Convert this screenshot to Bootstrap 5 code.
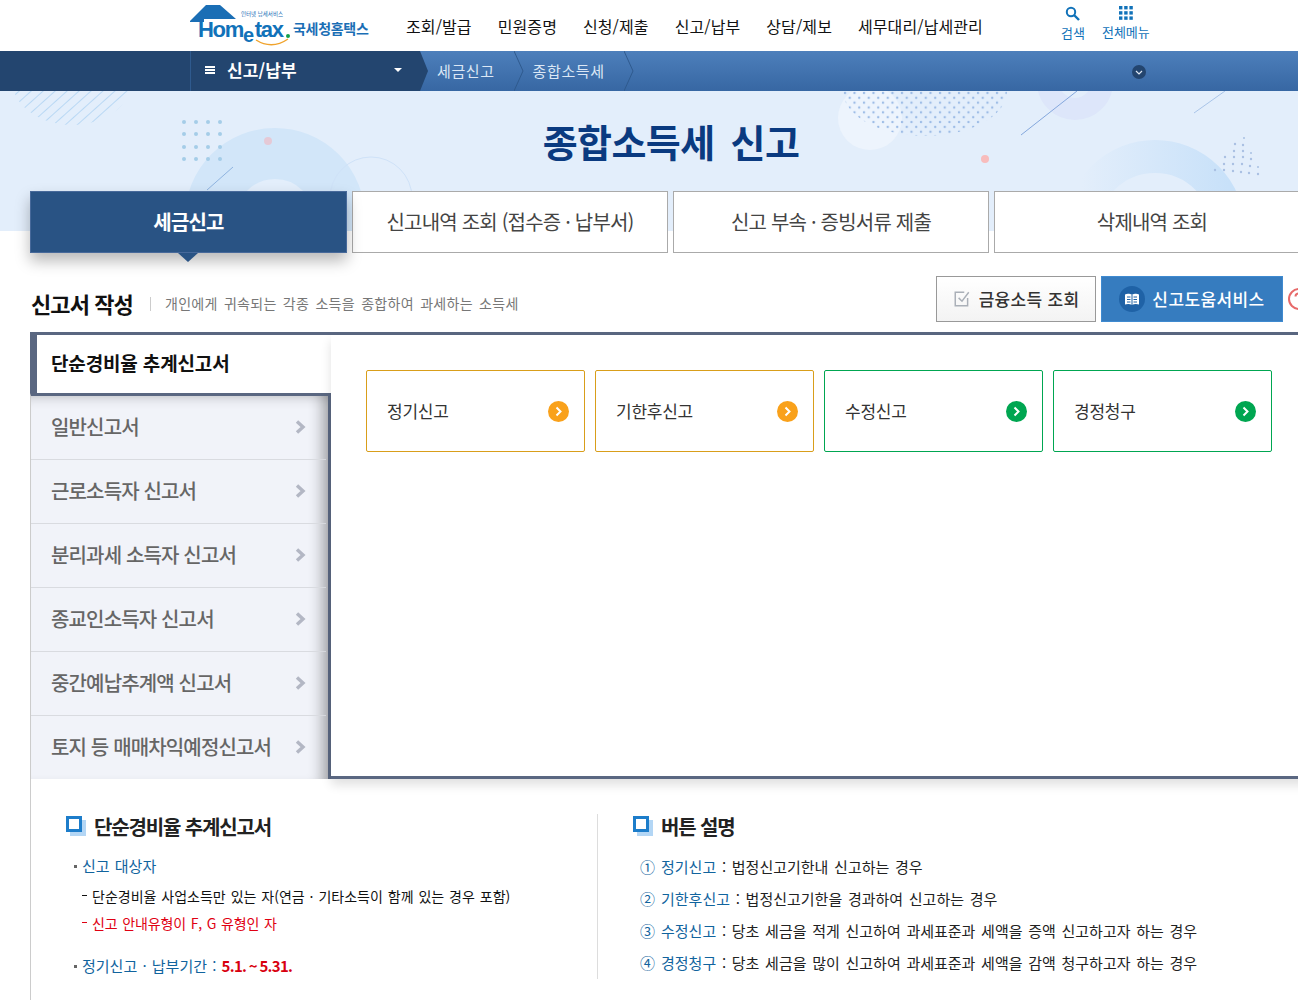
<!DOCTYPE html>
<html lang="ko">
<head>
<meta charset="utf-8">
<title>종합소득세 신고</title>
<link href="https://cdn.jsdelivr.net/npm/bootstrap@5.3.0/dist/css/bootstrap.min.css" rel="stylesheet">
<style>
  html, body { overflow-x: hidden; }
  body { font-family: "Noto Sans CJK KR", "Noto Sans", sans-serif; color: #222; font-size: 15px; }
  .top-head { height: 51px; padding-left: 190px; }
  .logo-svg { width: 182px; height: 50px; flex: none; }
  .top-menu { width: 655px; margin: 0 0 0 34px; padding: 0; gap: 26px; font-size: 16px; color: #111; letter-spacing: .1px; }
  .top-util { gap: 17px; font-size: 13px; color: #1172b9; line-height: 1; margin-bottom: 7px; }
  .top-util span { display: block; margin-top: 5px; }
  .path-bar { height: 40px; background: linear-gradient(#4d7fbb, #3767a3); color: #fff; }
  .path-main { width: 428px; height: 40px; padding-left: 190px; background: #23456f; clip-path: polygon(0 0, 420px 0, 428px 20px, 420px 100%, 0 100%); flex: none; }
  .path-title { width: 230px; height: 40px; border-left: 1px solid #2f5a8e; padding: 0 14px 2px 14px; font-size: 17px; font-weight: 700; letter-spacing: .1px; }
  .burger { width: 10px; height: 8px; border-top: 2px solid #fff; border-bottom: 2px solid #fff; position: relative; margin-right: 12px; }
  .burger::after { content: ""; position: absolute; left: 0; right: 0; top: 1px; height: 2px; background: #fff; }
  .caret-down { width: 0; height: 0; border: 4px solid transparent; border-top-color: #fff; border-bottom: 0; margin-left: auto; margin-right: 4px; }
  .crumb { font-size: 15px; color: #dbe7f5; letter-spacing: .6px; margin-left: 9px; }
  .crumb-sep { width: 10px; height: 40px; flex: none; margin-left: 19px; }
  .more-btn { width: 14px; height: 14px; border-radius: 50%; background: #23456f; position: absolute; left: 1132px; top: 14px; }
  .path-bar-in { height: 40px; }
  .hero { height: 140px; background: #e3eefb; overflow: hidden; }
  .hero-art { position: absolute; left: 0; top: 0; width: 1298px; height: 140px; }
  .hero-title { padding: 26px 0 0 44px; font-size: 38px; font-weight: 700; color: #0a3a80; line-height: 48px; letter-spacing: -0.6px; word-spacing: 6px; }
  .tab-row { margin: -40px 0 0 30px; gap: 5px; width: 1290px; }
  .tab-cell { width: 316px; height: 62px; background: #fff; border: 1px solid #aaa; font-size: 20px; color: #444; letter-spacing: -0.8px; flex: none; }
  .tab-cell.on { width: 317px; background: #295384; border-color: #47699a; color: #fff; font-weight: 700; box-shadow: 0 8px 14px rgba(0, 0, 0, .28); position: relative; }
  .tab-cell.on::after { content: ""; position: absolute; left: 147px; top: 61px; border: 10px solid transparent; border-top: 9px solid #295384; border-bottom: 0; }
  .title-row { height: 46px; width: 1280px; margin: 23px 0 10px 30px; }
  .title-main { font-size: 22px; font-weight: 700; color: #111; line-height: 1; padding: 16px 0 0 1px; letter-spacing: -0.9px; }
  .title-desc { font-size: 14px; color: #777; margin-left: 17px; padding: 0 0 0 15px; position: relative; top: 17px; letter-spacing: .3px; word-spacing: 2px; }
  .title-desc::before { content: ""; position: absolute; left: 0; top: 4px; height: 14px; width: 1px; background: #ccc; }
  .btn-fin { width: 160px; height: 46px; margin-left: auto; background: linear-gradient(#fff, #f3f3f3); border: 1px solid #999; font-size: 17px; font-weight: 500; color: #333; letter-spacing: .3px; flex: none; }
  .btn-help { width: 182px; height: 46px; margin-left: 5px; background: #367cbf; border: 1px solid #3f8ad0; font-size: 17px; font-weight: 500; color: #fff; letter-spacing: .4px; flex: none; }
  .help-round { width: 26px; height: 26px; border-radius: 50%; background: #1f62a6; margin-right: 7px; }
  .red-round { width: 22px; height: 22px; margin-left: 5px; flex: none; }
  .main-box { margin-left: 30px; border-top: 3px solid #5a6781; width: 1290px; }
  .side-col { width: 301px; flex: none; }
  .side-on { height: 58px; border-left: 7px solid #5a6781; padding-left: 14px; font-size: 19px; font-weight: 700; color: #111; letter-spacing: -0.15px; padding-bottom: 1px; }
  .side-list { border-top: 3px solid #5a6781; border-right: 3px solid #5a6781; border-left: 1px solid #ccc; background: #f1f3f9; box-shadow: inset -16px 0 14px -10px rgba(0, 0, 0, .3), inset 0 12px 12px -10px rgba(0, 0, 0, .18); margin: 0; padding: 0; }
  .side-item { height: 64px; margin-right: 2px; padding: 0 20px 2px 20px; border-bottom: 1px solid #d9dbe0; font-size: 20px; font-weight: 500; color: #666; letter-spacing: -0.85px; }
  .side-item:last-child { height: 63px; border-bottom: 0; }
  .side-chev { width: 11px; height: 14px; margin-left: auto; flex: none; }
  .work-panel { flex: 1; padding: 35px 0 0 35px; border-bottom: 3px solid #5a6781; box-shadow: 0 6px 10px rgba(0, 0, 0, .12); gap: 10px; }
  .pick-box { width: 219px; height: 82px; border: 1px solid #d99e1a; border-radius: 2px; padding: 0 15px 0 20px; font-size: 17px; color: #333; letter-spacing: -0.25px; flex: none; }
  .pick-box.go { border-color: #00a651; }
  .pick-dot { width: 21px; height: 21px; flex: none; margin-left: auto; }
  .guide { margin-left: 30px; border-left: 1px solid #ccc; padding-top: 35px; height: 221px; }
  .guide-left { width: 567px; padding-left: 35px; height: 165px; border-right: 1px solid #ddd; flex: none; }
  .guide-right { padding-left: 35px; }
  .guide-head { font-size: 20px; font-weight: 700; color: #222; line-height: 26px; letter-spacing: -1.15px; margin: 0 0 15px; padding-left: 28px; position: relative; }
  .guide-head::before { content: ""; position: absolute; left: 0; top: 2px; width: 16px; height: 16px; background: #fff; border: 3px solid #1d7dca; box-shadow: 4px 4px 0 0 #b3d6f5; }
  .guide-blue { color: #11649e; }
  .guide-sub { font-size: 15px; line-height: 22px; padding-left: 16px; position: relative; margin: 0; word-spacing: 1px; }
  .guide-sub::before { content: ""; position: absolute; left: 8px; top: 10px; width: 3px; height: 3px; background: #666; }
  .guide-sub b { color: #d8000f; letter-spacing: -.7px; word-spacing: -1px; }
  .guide-line { font-size: 14px; line-height: 20px; padding-left: 26px; position: relative; margin: 0; color: #111; word-spacing: 1px; }
  .guide-gap1 { margin-bottom: 9px; }
  .guide-gap2 { margin-bottom: 7px; }
  .guide-gap3 { margin-bottom: 22px; }
  .guide-line.is-red { color: #e00012; letter-spacing: -.1px; word-spacing: .8px; }
  .guide-line::before { content: ""; position: absolute; left: 16px; top: 9px; width: 5px; height: 1px; background: currentColor; }
  .step-list { margin-top: -4px; }
  .step-row { font-size: 15px; line-height: 32px; margin: 0 0 0 7px; height: 32px; word-spacing: 1.5px; }
  .step-no { display: inline-block; width: 21px; color: #11649e; }
</style>
</head>
<body>
<header class="top-head d-flex align-items-center bg-white">
  <svg class="logo-svg" viewBox="190 0 182 50">
    <path d="M190 20 L206 4 L220 4 L236 18 L204 18 L204 21 L190 21 Z" fill="#1a6eb5"/>
    <text x="198" y="36" font-family="Liberation Sans" font-weight="700" font-size="22" fill="#1172b9" letter-spacing="-1.3">Hom<tspan dy="5" font-size="20">e</tspan><tspan dy="-5" dx="2">tax</tspan></text>
    <circle cx="288" cy="35" r="2" fill="#12a04b"/>
    <path d="M256 39 Q272 49 288 38" fill="none" stroke="#f0a32c" stroke-width="1.4"/>
    <text x="241" y="15" font-family="Noto Sans CJK KR" font-size="5.5" fill="#1a6eb5">인터넷 납세서비스</text>
    <text x="293" y="33" font-family="Noto Sans CJK KR" font-weight="700" font-size="14" fill="#1a6eb5" letter-spacing="-.3">국세청홈택스</text>
  </svg>
  <ul class="top-menu list-unstyled d-flex">
    <li>조회/발급</li><li>민원증명</li><li>신청/제출</li><li>신고/납부</li><li>상담/제보</li><li>세무대리/납세관리</li>
  </ul>
  <div class="top-util d-flex text-center">
    <div>
      <svg width="15" height="15" viewBox="0 0 15 15"><circle cx="6" cy="6" r="4.2" fill="none" stroke="#1172b9" stroke-width="2"/><path d="M9 9 L14 14" stroke="#1172b9" stroke-width="2.4"/></svg>
      <span>검색</span>
    </div>
    <div>
      <svg width="14" height="14" viewBox="0 0 14 14" fill="#1172b9"><rect width="3.4" height="3.4"/><rect x="5.2" width="3.4" height="3.4"/><rect x="10.4" width="3.4" height="3.4"/><rect y="5.2" width="3.4" height="3.4"/><rect x="5.2" y="5.2" width="3.4" height="3.4"/><rect x="10.4" y="5.2" width="3.4" height="3.4"/><rect y="10.4" width="3.4" height="3.4"/><rect x="5.2" y="10.4" width="3.4" height="3.4"/><rect x="10.4" y="10.4" width="3.4" height="3.4"/></svg>
      <span>전체메뉴</span>
    </div>
  </div>
</header>

<nav class="path-bar">
  <div class="path-bar-in d-flex align-items-center position-relative">
    <div class="path-main">
      <div class="path-title d-flex align-items-center"><i class="burger"></i>신고/납부<i class="caret-down"></i></div>
    </div>
    <span class="crumb">세금신고</span>
    <svg class="crumb-sep" viewBox="0 0 10 40"><path d="M0 0 L9 20 L0 40" fill="none" stroke="#2f5a8e"/></svg>
    <span class="crumb">종합소득세</span>
    <svg class="crumb-sep" viewBox="0 0 10 40"><path d="M0 0 L9 20 L0 40" fill="none" stroke="#2f5a8e"/></svg>
    <span class="more-btn d-flex align-items-center justify-content-center"><svg width="8" height="5" viewBox="0 0 8 5"><path d="M1 1 L4 4 L7 1" fill="none" stroke="#dfe8f3" stroke-width="1.2"/></svg></span>
  </div>
</nav>

<section class="hero position-relative">
  <svg class="hero-art" viewBox="0 91 1298 140">
    <defs>
      <clipPath id="stripeClip"><ellipse cx="72" cy="80" rx="60" ry="45"/></clipPath>
      <pattern id="stripeFill" width="8" height="8" patternUnits="userSpaceOnUse" patternTransform="rotate(-42)"><rect width="8" height="1" fill="#b9d8f4"/></pattern>
      <pattern id="dotFill" width="9.5" height="9.7" patternUnits="userSpaceOnUse" x="843" y="91"><circle cx="2" cy="2" r="1.2" fill="#9dbce6"/><circle cx="6.75" cy="6.85" r="1.2" fill="#9dbce6"/></pattern>
      <linearGradient id="arcFill" x1="0" x2="1"><stop offset="0" stop-color="#e3eefb"/><stop offset="1" stop-color="#c8e1f9"/></linearGradient>
    </defs>
    <rect x="0" y="91" width="140" height="40" fill="url(#stripeFill)" clip-path="url(#stripeClip)"/>
    <circle cx="275" cy="218" r="64.5" fill="none" stroke="#d2e6f9" stroke-width="51"/>
    <circle cx="371" cy="198" r="41" fill="none" stroke="#cfe2f8"/>
    <g fill="#a5cde8">
      <circle cx="184" cy="122" r="2"/><circle cx="196" cy="122" r="2"/><circle cx="208" cy="122" r="2"/><circle cx="220" cy="122" r="2"/>
      <circle cx="184" cy="134" r="2"/><circle cx="196" cy="134" r="2"/><circle cx="208" cy="134" r="2"/><circle cx="220" cy="134" r="2"/>
      <circle cx="184" cy="147" r="2"/><circle cx="196" cy="147" r="2"/><circle cx="208" cy="147" r="2"/><circle cx="220" cy="147" r="2"/>
      <circle cx="184" cy="159" r="2"/><circle cx="196" cy="159" r="2"/><circle cx="208" cy="159" r="2"/><circle cx="220" cy="159" r="2"/>
    </g>
    <circle cx="268" cy="141" r="4" fill="#e5c9d6"/>
    <path d="M207 190 L233 167" stroke="#8fb4e0"/>
    <circle cx="870" cy="118" r="32" fill="#edf4fd"/>
    <path d="M843 91 A82 45 0 0 0 1007 91 Z" fill="url(#dotFill)"/>
    <circle cx="1075" cy="82" r="27" fill="none" stroke="#dde6fa" stroke-width="22"/>
    <path d="M1021 135 L1077 91" stroke="#84a7dc"/>
    <path d="M1194 113 L1225 91" stroke="#a9c4e8"/>
    <circle cx="985" cy="159" r="4" fill="#f8bcbc"/>
    <circle cx="1155" cy="230" r="73.5" fill="none" stroke="url(#arcFill)" stroke-width="33"/>
    <g fill="#a9c0e3">
      <circle cx="1244" cy="138" r="1"/><circle cx="1235" cy="144" r="1.2"/><circle cx="1243" cy="145" r="1.2"/>
      <circle cx="1234" cy="151" r="1.2"/><circle cx="1243" cy="151" r="1.2"/><circle cx="1234" cy="157" r="1.2"/><circle cx="1243" cy="157" r="1.2"/><circle cx="1251" cy="153" r="1"/>
      <circle cx="1225" cy="157" r="1.2"/><circle cx="1251" cy="159" r="1.2"/>
      <circle cx="1224" cy="164" r="1.2"/><circle cx="1233" cy="164" r="1.2"/><circle cx="1242" cy="164" r="1.2"/><circle cx="1250" cy="166" r="1.2"/><circle cx="1258" cy="167" r="1"/>
      <circle cx="1215" cy="170" r="1.2"/><circle cx="1224" cy="170" r="1.2"/><circle cx="1233" cy="171" r="1.2"/><circle cx="1241" cy="172" r="1.2"/><circle cx="1249" cy="173" r="1.2"/><circle cx="1258" cy="174" r="1.2"/>
    </g>
  </svg>
  <h1 class="hero-title position-relative text-center m-0">종합소득세 신고</h1>
</section>

<div class="tab-row d-flex position-relative">
  <div class="tab-cell on d-flex align-items-center justify-content-center">세금신고</div>
  <div class="tab-cell d-flex align-items-center justify-content-center">신고내역 조회 (접수증 · 납부서)</div>
  <div class="tab-cell d-flex align-items-center justify-content-center">신고 부속 · 증빙서류 제출</div>
  <div class="tab-cell d-flex align-items-center justify-content-center">삭제내역 조회</div>
</div>

<div class="title-row d-flex align-items-start">
  <div class="title-main">신고서 작성</div>
  <div class="title-desc">개인에게 귀속되는 각종 소득을 종합하여 과세하는 소득세</div>
  <div class="btn-fin d-flex align-items-center justify-content-center">
    <svg class="me-2" width="18" height="18" viewBox="0 0 16 16"><path d="M13 7 V14 H2 V2 H10" fill="none" stroke="#aab0b8" stroke-width="1.3"/><path d="M5 7 L8 10 L14 2" fill="none" stroke="#aab0b8" stroke-width="1.3"/></svg>
    금융소득 조회
  </div>
  <div class="btn-help d-flex align-items-center justify-content-center">
    <span class="help-round d-flex align-items-center justify-content-center"><svg width="16" height="13" viewBox="0 0 16 13"><path d="M8 2 C6 .6 3 .6 1 1.4 V11.6 C3 10.8 6 10.8 8 12 C10 10.8 13 10.8 15 11.6 V1.4 C13 .6 10 .6 8 2 Z" fill="#fff"/><path d="M3 4 H6.5 M3 6.5 H6.5 M3 9 H6.5 M9.5 4 H13 M9.5 6.5 H13 M9.5 9 H13 M8 2 V12" stroke="#1f62a6"/></svg></span>
    신고도움서비스
  </div>
  <svg class="red-round align-self-center" viewBox="0 0 22 22"><circle cx="11" cy="11" r="10" fill="none" stroke="#e76a6a" stroke-width="2"/><path d="M7.5 8.5 C7.5 4.5 14.5 4.5 14.5 8.5 C14.5 11 11 11 11 14 M11 16 V18" fill="none" stroke="#e76a6a" stroke-width="2"/></svg>
</div>

<main class="main-box d-flex">
  <div class="side-col">
    <div class="side-on d-flex align-items-center bg-white">단순경비율 추계신고서</div>
    <ul class="side-list list-unstyled">
      <li class="side-item d-flex align-items-center">일반신고서<svg class="side-chev" viewBox="0 0 11 14"><path d="M2 1.5 L8 7 L2 12.5" fill="none" stroke="#b3b7c4" stroke-width="3.4"/></svg></li>
      <li class="side-item d-flex align-items-center">근로소득자 신고서<svg class="side-chev" viewBox="0 0 11 14"><path d="M2 1.5 L8 7 L2 12.5" fill="none" stroke="#b3b7c4" stroke-width="3.4"/></svg></li>
      <li class="side-item d-flex align-items-center">분리과세 소득자 신고서<svg class="side-chev" viewBox="0 0 11 14"><path d="M2 1.5 L8 7 L2 12.5" fill="none" stroke="#b3b7c4" stroke-width="3.4"/></svg></li>
      <li class="side-item d-flex align-items-center">종교인소득자 신고서<svg class="side-chev" viewBox="0 0 11 14"><path d="M2 1.5 L8 7 L2 12.5" fill="none" stroke="#b3b7c4" stroke-width="3.4"/></svg></li>
      <li class="side-item d-flex align-items-center">중간예납추계액 신고서<svg class="side-chev" viewBox="0 0 11 14"><path d="M2 1.5 L8 7 L2 12.5" fill="none" stroke="#b3b7c4" stroke-width="3.4"/></svg></li>
      <li class="side-item d-flex align-items-center">토지 등 매매차익예정신고서<svg class="side-chev" viewBox="0 0 11 14"><path d="M2 1.5 L8 7 L2 12.5" fill="none" stroke="#b3b7c4" stroke-width="3.4"/></svg></li>
    </ul>
  </div>
  <div class="work-panel d-flex align-items-start">
    <div class="pick-box d-flex align-items-center">정기신고<svg class="pick-dot" viewBox="0 0 21 21"><circle cx="10.5" cy="10.5" r="10.5" fill="#f9a11b"/><path d="M8.5 6.5 L12.5 10.5 L8.5 14.5" fill="none" stroke="#fff" stroke-width="2"/></svg></div>
    <div class="pick-box d-flex align-items-center">기한후신고<svg class="pick-dot" viewBox="0 0 21 21"><circle cx="10.5" cy="10.5" r="10.5" fill="#f9a11b"/><path d="M8.5 6.5 L12.5 10.5 L8.5 14.5" fill="none" stroke="#fff" stroke-width="2"/></svg></div>
    <div class="pick-box go d-flex align-items-center">수정신고<svg class="pick-dot" viewBox="0 0 21 21"><circle cx="10.5" cy="10.5" r="10.5" fill="#00a651"/><path d="M8.5 6.5 L12.5 10.5 L8.5 14.5" fill="none" stroke="#fff" stroke-width="2"/></svg></div>
    <div class="pick-box go d-flex align-items-center">경정청구<svg class="pick-dot" viewBox="0 0 21 21"><circle cx="10.5" cy="10.5" r="10.5" fill="#00a651"/><path d="M8.5 6.5 L12.5 10.5 L8.5 14.5" fill="none" stroke="#fff" stroke-width="2"/></svg></div>
  </div>
</main>

<section class="guide d-flex">
  <div class="guide-left">
    <h2 class="guide-head">단순경비율 추계신고서</h2>
    <p class="guide-sub guide-blue guide-gap1">신고 대상자</p>
    <p class="guide-line guide-gap2">단순경비율 사업소득만 있는 자(연금 · 기타소득이 함께 있는 경우 포함)</p>
    <p class="guide-line is-red guide-gap3">신고 안내유형이 F, G 유형인 자</p>
    <p class="guide-sub guide-blue">정기신고 · 납부기간 : <b>5.1. ~ 5.31.</b></p>
  </div>
  <div class="guide-right">
    <h2 class="guide-head">버튼 설명</h2>
    <div class="step-list">
      <p class="step-row"><span class="step-no">①</span><span class="guide-blue">정기신고</span> : 법정신고기한내 신고하는 경우</p>
      <p class="step-row"><span class="step-no">②</span><span class="guide-blue">기한후신고</span> : 법정신고기한을 경과하여 신고하는 경우</p>
      <p class="step-row"><span class="step-no">③</span><span class="guide-blue">수정신고</span> : 당초 세금을 적게 신고하여 과세표준과 세액을 증액 신고하고자 하는 경우</p>
      <p class="step-row"><span class="step-no">④</span><span class="guide-blue">경정청구</span> : 당초 세금을 많이 신고하여 과세표준과 세액을 감액 청구하고자 하는 경우</p>
    </div>
  </div>
</section>

<script src="https://cdn.jsdelivr.net/npm/bootstrap@5.3.0/dist/js/bootstrap.bundle.min.js"></script>
</body>
</html>
